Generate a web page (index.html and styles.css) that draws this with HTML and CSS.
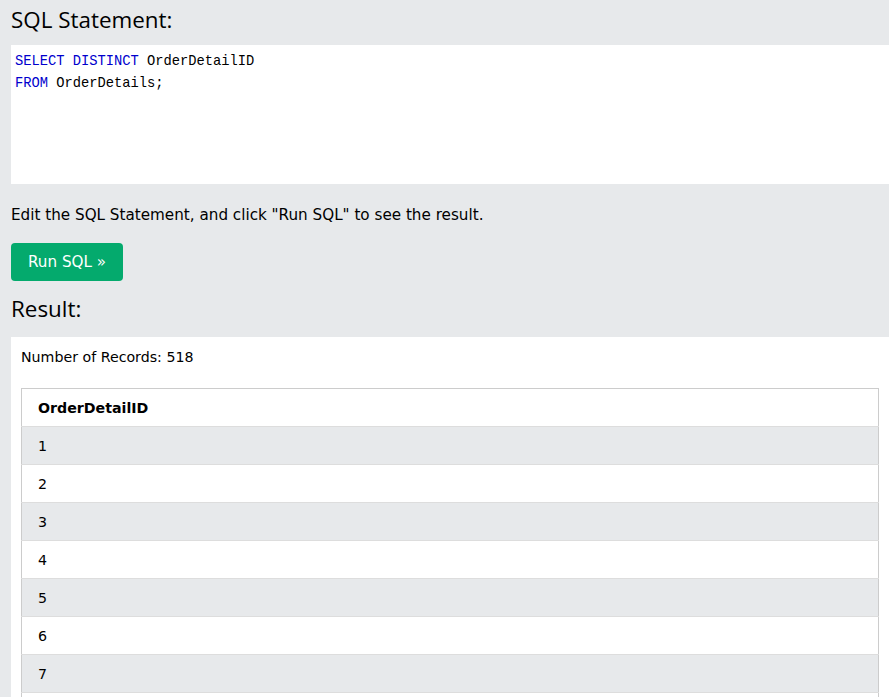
FILE: index.html
```html
<!DOCTYPE html>
<html>
<head>
<meta charset="utf-8">
<link rel="stylesheet" href="styles.css">
</head>
<body>
<div class="page">
  <h2 class="title">SQL Statement:</h2>
  <div class="code">
    <div class="line"><span class="kw">SELECT DISTINCT</span> OrderDetailID</div>
    <div class="line"><span class="kw">FROM</span> OrderDetails;</div>
  </div>
  <p class="hint">Edit the SQL Statement, and click "Run SQL" to see the result.</p>
  <button class="run">Run SQL »</button>
  <h2 class="title result-title">Result:</h2>
  <div class="result">
    <div class="count">Number of Records: 518</div>
    <table class="grid">
      <tr><th>OrderDetailID</th></tr>
      <tr><td>1</td></tr>
      <tr><td>2</td></tr>
      <tr><td>3</td></tr>
      <tr><td>4</td></tr>
      <tr><td>5</td></tr>
      <tr><td>6</td></tr>
      <tr><td>7</td></tr>
      <tr><td></td></tr>
    </table>
  </div>
</div>
</body>
</html>
```
FILE: styles.css
```css
html, body {
  margin: 0;
  padding: 0;
  background: #E7E9EB;
  overflow: hidden;
}
.page {
  padding-left: 11px;
  font-family: "DejaVu Sans", Verdana, sans-serif;
  color: #000;
}
.title {
  margin: 0;
  padding-top: 5px;
  height: 40px;
  font-family: "Open Sans", "Noto Sans", sans-serif;
  font-weight: 400;
  font-size: 22.4px;
  line-height: 30px;
}
.code {
  background: #fff;
  height: 139px;
  box-sizing: border-box;
  padding: 6px 4px 4px;
  font-family: "Liberation Mono", monospace;
  font-size: 13.75px;
  line-height: 22px;
  color: #000;
}
.kw { color: mediumblue; }
.hint {
  margin: 0;
  box-sizing: border-box;
  padding-top: 21px;
  height: 59px;
  font-size: 15.2px;
  line-height: 20px;
}
.run {
  display: block;
  margin: 0;
  width: 112px;
  height: 38px;
  border: none;
  border-radius: 4px;
  background: #04AA6D;
  color: #fff;
  font-family: "DejaVu Sans", Verdana, sans-serif;
  font-size: 15.2px;
  padding: 0;
}
.result-title {
  margin-top: 13px;
  padding-top: 0;
  height: 43px;
}
.result {
  background: #fff;
  padding: 10px 10px 0 10px;
}
.count {
  font-size: 14.2px;
  line-height: 20px;
  height: 41px;
}
.grid {
  width: 100%;
  border-collapse: collapse;
  border: 1px solid #ccc;
  font-size: 14.2px;
}
.grid th, .grid td {
  text-align: left;
  height: 37px;
  padding: 0 16px;
  border-bottom: 1px solid #ddd;
}
.grid th { font-weight: bold; }
.grid tr:nth-child(even) { background: #E7E9EB; }
```
